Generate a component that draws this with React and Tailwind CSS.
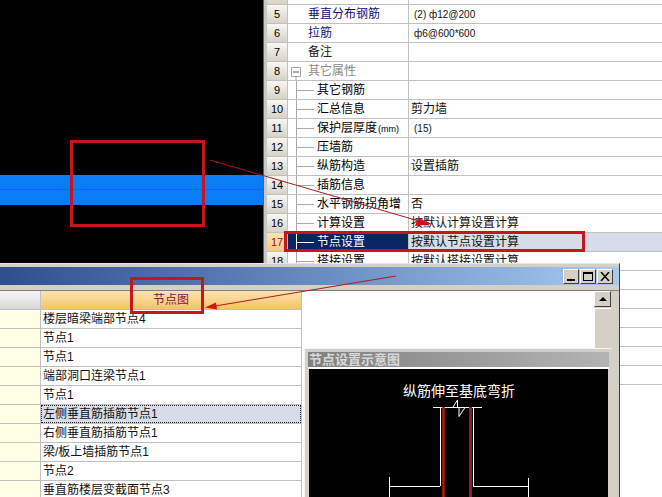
const FONT = "font-['Liberation_Sans','Noto_Sans_CJK_SC',sans-serif]";

const rows = [
  { n: 4, name: '水平分布钢筋', value: '', kind: 'blue' },
  { n: 5, name: '垂直分布钢筋', value: '(2) ф12@200', kind: 'blue', small: true },
  { n: 6, name: '拉筋', value: 'ф6@600*600', kind: 'blue', small: true },
  { n: 7, name: '备注', value: '', kind: 'plain' },
  { n: 8, name: '其它属性', value: '', kind: 'group' },
  { n: 9, name: '其它钢筋', value: '', kind: 'tree' },
  { n: 10, name: '汇总信息', value: '剪力墙', kind: 'tree' },
  { n: 11, name: '保护层厚度', unit: '(mm)', value: '(15)', kind: 'tree', small: true },
  { n: 12, name: '压墙筋', value: '', kind: 'tree' },
  { n: 13, name: '纵筋构造', value: '设置插筋', kind: 'tree' },
  { n: 14, name: '插筋信息', value: '', kind: 'tree' },
  { n: 15, name: '水平钢筋拐角增', value: '否', kind: 'tree' },
  { n: 16, name: '计算设置', value: '按默认计算设置计算', kind: 'tree' },
  { n: 17, name: '节点设置', value: '按默认节点设置计算', kind: 'tree', selected: true },
  { n: 18, name: '搭接设置', value: '按默认搭接设置计算', kind: 'tree' },
];

const nodes = [
  '楼层暗梁端部节点4',
  '节点1',
  '节点1',
  '端部洞口连梁节点1',
  '节点1',
  '左侧垂直筋插筋节点1',
  '右侧垂直筋插筋节点1',
  '梁/板上墙插筋节点1',
  '节点2',
  '垂直筋楼层变截面节点3',
];

function TreeMark({ kind, selected }) {
  if (kind === 'group') {
    return (
      <svg width="20" height="19" className="shrink-0">
        <rect x="3.5" y="5.5" width="9" height="9" fill="#fff" stroke="#a8a8a8" />
        <path d="M5 10h6" stroke="#555" />
        <path d="M8 15v4" stroke="#a8a8a8" />
      </svg>
    );
  }
  if (kind === 'tree') {
    const c = selected ? '#ffffff' : '#a8a8a8';
    return (
      <svg width="29" height="19" className="shrink-0">
        <path d="M8.5 0v19M9 9.5h17" stroke={c} />
      </svg>
    );
  }
  return <span className="w-5 shrink-0" />;
}

function PropertyRow({ row }) {
  const { n, name, unit, value, kind, selected, small } = row;
  return (
    <div className="flex h-[19px] shrink-0 border-b border-[#c0c0c0]">
      <div
        className={`w-[21px] shrink-0 flex items-center justify-center text-[11px] border-r border-[#c0c0c0] ${
          selected
            ? 'bg-gradient-to-b from-[#ffe3b5] to-[#fbc67d] text-[#8a1c1c]'
            : 'bg-gradient-to-b from-[#f8f7f2] to-[#d6d3c8] text-black'
        }`}
      >
        {n}
      </div>
      <div
        className={`w-[121px] shrink-0 flex items-center border-r border-[#c0c0c0] text-[12px] whitespace-nowrap overflow-hidden ${
          selected ? 'bg-[#0a2566] text-white' : 'bg-white'
        } ${kind === 'blue' ? 'text-[#10107a]' : ''} ${kind === 'group' ? 'text-[#8a8a8a]' : ''} ${
          kind === 'plain' ? 'text-[#222222]' : ''
        }`}
      >
        <TreeMark kind={kind} selected={selected} />
        <span>
          {name}
          {unit && <span className="text-[9px] ml-px">{unit}</span>}
        </span>
      </div>
      <div
        className={`flex-1 flex items-center whitespace-nowrap overflow-hidden ${
          small ? 'text-[10px] pl-[5px]' : 'text-[12px] pl-[2px]'
        } ${selected ? 'bg-[#d8dce8]' : 'bg-white'} text-[#111111]`}
      >
        {value}
      </div>
    </div>
  );
}

function WinButton({ children }) {
  return (
    <div className="w-[16px] h-[15px] bg-[#d4d0c8] border border-t-white border-l-white border-r-[#404040] border-b-[#404040] flex items-center justify-center">
      {children}
    </div>
  );
}

function Diagram() {
  return (
    <svg width="298" height="128" className="absolute left-0 top-0">
      <g stroke="#ffffff" fill="none" strokeWidth="1">
        <path d="M124 38.5h49" />
        <path d="M131.5 38v79M164.5 38v79" />
        <path d="M131 117.5H80.5M164 117.5h55.5" />
        <path d="M80.5 108v20M219.5 109v19" />
        <path d="M144 38l4.5-7v7" />
        <path d="M156 38.5l-6 9v-9" />
      </g>
      <path d="M134.5 38v90" stroke="#b0181a" strokeWidth="2.5" />
      <path d="M161.5 38v90" stroke="#8c2020" strokeWidth="3" />
    </svg>
  );
}

function NodeDialog() {
  return (
    <div className="absolute left-0 top-[263px] w-[620px] h-[234px] bg-[#d4d0c8] border-t border-t-[#e8e6e0] border-r border-r-[#404040] flex flex-col">
      <div className="mt-[3px] h-[18px] shrink-0 bg-gradient-to-r from-[#2f4e8f] to-[#a6caf0] flex items-center justify-end gap-px pr-[6px]">
        <WinButton>
          <span className="block w-[8px] h-[2px] bg-black mt-[7px]" />
        </WinButton>
        <WinButton>
          <span className="block w-[10px] h-[9px] border border-black border-t-2" />
        </WinButton>
        <WinButton>
          <svg width="10" height="9">
            <path d="M1 0l8 9M9 0L1 9" stroke="#000" strokeWidth="1.5" />
          </svg>
        </WinButton>
      </div>
      <div className="mt-[5px] h-px bg-[#808080] shrink-0" />
      <div className="relative flex flex-1 min-h-0">
        <div className="w-[302px] shrink-0 bg-white border-r border-[#c0c0c0] flex flex-col overflow-hidden">
          <div className="flex h-[19px] shrink-0 border-b border-[#c0c0c0]">
            <div className="w-[41px] shrink-0 bg-gradient-to-b from-[#f6f6f6] to-[#d8d8d8] border-r border-[#c0c0c0]" />
            <div className="flex-1 bg-gradient-to-b from-[#fce3b0] to-[#f5c266] flex items-center justify-center text-[12px] text-[#8a1440]">
              节点图
            </div>
          </div>
          {nodes.map((t, i) => (
            <div key={i} className="flex h-[19px] shrink-0 border-b border-[#c0c0c0]">
              <div className="w-[41px] shrink-0 bg-[#ffffe6] border-r border-[#c0c0c0]" />
              <div
                className={`flex-1 flex items-center pl-[2px] text-[12px] text-[#111111] whitespace-nowrap ${
                  i === 5 ? 'bg-[#d8dce8] outline-1 outline-dotted -outline-offset-1 outline-[#222222]' : ''
                }`}
              >
                {t}
              </div>
            </div>
          ))}
        </div>
        <div className="flex-1 flex pr-[8px]">
          <div className="flex-1 bg-white flex justify-end">
            <div className="w-[17px] flex flex-col gap-px bg-[#d4d0c8]">
              <div className="h-[16px] shrink-0 bg-[#d4d0c8] border border-t-white border-l-white border-r-[#404040] border-b-[#404040] flex items-center justify-center">
                <span className="w-0 h-0 border-l-[4px] border-r-[4px] border-b-[4px] border-l-transparent border-r-transparent border-b-black" />
              </div>
              <div className="flex-1 bg-[#d4d0c8] border-t border-l border-white" />
            </div>
          </div>
        </div>

        <div className="absolute left-[304px] top-[57px] w-[308px] bottom-0 bg-[#d4d0c8] border-t border-l border-[#f4f3ef] px-[3px] pt-[3px] flex flex-col">
          <div className="h-[15px] shrink-0 bg-gradient-to-r from-[#808080] to-[#b4b4b4] flex items-center pl-[1px] text-[13px] font-bold text-[#d8d8d8] leading-none">
            节点设置示意图
          </div>
          <div className="h-[2px] shrink-0 bg-white" />
          <div className="relative flex-1 mx-[1px] bg-black overflow-hidden">
            <div className="absolute left-[94px] top-[13px] text-[14px] leading-[18px] text-white whitespace-nowrap">
              纵筋伸至基底弯折
            </div>
            <Diagram />
          </div>
        </div>
      </div>
    </div>
  );
}

function Annotations() {
  return (
    <>
      <div className="absolute left-[70px] top-[140px] w-[135px] h-[87px] border-[3px] border-[#c4161c]" />
      <div className="absolute left-[284px] top-[231px] w-[301px] h-[21px] border-[3px] border-[#c4161c]" />
      <div className="absolute left-[130px] top-[277px] w-[74px] h-[37px] border-[3px] border-[#c4161c]" />
      <svg width="662" height="497" className="absolute left-0 top-0 pointer-events-none">
        <path d="M210 160L424 222.5" stroke="#b01820" strokeWidth="1" />
        <path d="M432 224L418 218l-3 8z" fill="#d8101a" />
        <path d="M396 276L212 306.5" stroke="#b01820" strokeWidth="1" />
        <path d="M205 307.5l11-5 1 7z" fill="#d8101a" />
      </svg>
    </>
  );
}

export default function App() {
  return (
    <div className={`relative w-[662px] h-[497px] overflow-hidden bg-white ${FONT}`}>
      <div className="flex h-full">
        <div className="w-[263px] shrink-0 h-[264px] bg-black flex flex-col">
          <div className="mt-[175px] h-[30px] pt-[14px] bg-[#0a7cf5]">
            <div className="h-px bg-[#b03050]" />
          </div>
        </div>
        <div className="w-[4px] shrink-0 bg-[#c8c8c4] border-l border-[#606060]" />
        <div className="flex-1 flex flex-col overflow-hidden bg-white -mt-[14px]">
          {rows.map((r) => (
            <PropertyRow key={r.n} row={r} />
          ))}
          {[0, 1, 2, 3, 4, 5].map((i) => (
            <div key={i} className="h-[19px] shrink-0 border-b border-[#c0c0c0]" />
          ))}
        </div>
      </div>
      <NodeDialog />
      <Annotations />
    </div>
  );
}
